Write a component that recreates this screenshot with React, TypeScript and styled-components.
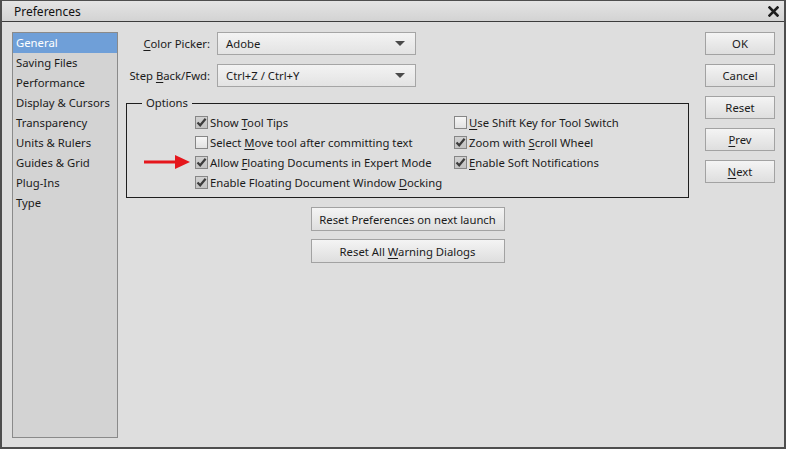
import styled, { createGlobalStyle } from 'styled-components';

const Global = createGlobalStyle`
  html, body { margin: 0; padding: 0; background: #dedede; }
  body { font-family: "Noto Sans", "DejaVu Sans", sans-serif; font-size: 11.3px; color: #1b1b1b; }
  * { box-sizing: border-box; }
`;

const Window = styled.div`
  width: 786px;
  height: 449px;
  display: flex;
  flex-direction: column;
  background: #dedede;
  border: 2px solid #4e4e4e;
  border-top-width: 1px;
`;

const TitleBar = styled.div`
  height: 21px;
  flex-shrink: 0;
  display: flex;
  align-items: center;
  justify-content: space-between;
  padding: 0 5px 0 12px;
  background: linear-gradient(#e4e4e4, #d3d3d3);
  border-bottom: 1px solid #3c3c3c;
  font-size: 12px;
  color: #111;
`;

const Body = styled.div`
  flex: 1;
  display: flex;
  padding: 10px 9px 9px 10px;
  min-height: 0;
`;

const Sidebar = styled.ul`
  list-style: none;
  margin: 0;
  padding: 0;
  width: 106px;
  flex-shrink: 0;
  background: #d3d3d3;
  border: 1px solid #8a8a8a;
`;

const SideItem = styled.li<{ $active?: boolean }>`
  height: 20px;
  line-height: 20px;
  padding-left: 3px;
  background: ${p => (p.$active ? '#6f9fd8' : 'transparent')};
  color: ${p => (p.$active ? '#fff' : '#1b1b1b')};
`;

const Main = styled.div`
  flex: 1;
  margin-left: 8px;
  display: flex;
  flex-direction: column;
  position: relative;
`;

const Form = styled.div`
  display: grid;
  grid-template-columns: 91px 199px;
  row-gap: 9px;
  align-items: center;
`;

const Label = styled.label`
  text-align: right;
  padding-right: 7px;
  white-space: nowrap;
`;

const Select = styled.div`
  height: 23px;
  display: flex;
  align-items: center;
  justify-content: space-between;
  padding: 0 10px 0 8px;
  border: 1px solid #a5a5a5;
  background: linear-gradient(#f3f3f3, #e3e3e3);
`;

const Caret = styled.span`
  width: 0;
  height: 0;
  border-left: 5px solid transparent;
  border-right: 5px solid transparent;
  border-top: 5px solid #4a4a4a;
`;

const Options = styled.fieldset`
  margin: 9px 0 0;
  padding: 2px 0 5px;
  border: 1px solid #1e1e1e;
`;

const Legend = styled.legend`
  margin-left: 15px;
  padding: 0 4px;
  line-height: 14px;
`;

const OptionGrid = styled.div`
  margin-left: 68px;
  display: grid;
  grid-template-columns: 259px 1fr;
  grid-auto-rows: 20px;
  align-items: center;
`;

const Check = styled.label`
  display: flex;
  align-items: center;
  gap: 2px;
  white-space: nowrap;
`;

const Box = styled.span<{ $on?: boolean }>`
  width: 13px;
  height: 13px;
  flex-shrink: 0;
  border: 1px solid #868686;
  background: ${p => (p.$on ? 'linear-gradient(#d2d2d2, #c2c2c2)' : 'linear-gradient(#f6f6f6, #e2e2e2)')};
  display: flex;
  align-items: center;
  justify-content: center;
`;

const U = styled.span`
  text-decoration: underline;
  text-underline-offset: 2px;
`;

const Arrow = styled.svg`
  position: absolute;
  left: 18px;
  top: 122px;
`;

const CenterButtons = styled.div`
  display: flex;
  flex-direction: column;
  align-items: center;
  gap: 8px;
  margin-top: 9px;
`;

const Button = styled.div<{ $w?: number }>`
  width: ${p => p.$w ?? 70}px;
  height: ${p => (p.$w ? 24 : 23)}px;
  display: flex;
  align-items: center;
  justify-content: center;
  border: 1px solid #a2a2a2;
  background: linear-gradient(#f4f4f4, #dedede);
  color: #1b1b1b;
  white-space: nowrap;
`;

const Side = styled.div`
  width: 70px;
  margin-left: 16px;
  display: flex;
  flex-direction: column;
  gap: 9px;
`;

const Tick = ({ on }: { on?: boolean }) => (
  <Box $on={on}>
    {on && (
      <svg width="11" height="11" viewBox="0 0 11 11">
        <path d="M1.5 5.5 L4.2 8.3 L9.6 1.8" fill="none" stroke="#3c3c3c" strokeWidth="2.2" />
      </svg>
    )}
  </Box>
);

const CloseIcon = () => (
  <svg width="11" height="11" viewBox="0 0 11 11">
    <path d="M1.5 1.5 L9.5 9.5 M9.5 1.5 L1.5 9.5" stroke="#1e1e1e" strokeWidth="2.6" strokeLinecap="square" />
  </svg>
);

const sections = ['General', 'Saving Files', 'Performance', 'Display & Cursors', 'Transparency', 'Units & Rulers', 'Guides & Grid', 'Plug-Ins', 'Type'];

export default function App() {
  return (
    <>
      <Global />
      <Window>
        <TitleBar>
          <span>Preferences</span>
          <CloseIcon />
        </TitleBar>
        <Body>
          <Sidebar>
            {sections.map((s, i) => (
              <SideItem key={s} $active={i === 0}>{s}</SideItem>
            ))}
          </Sidebar>
          <Main>
            <Form>
              <Label><U>C</U>olor Picker:</Label>
              <Select><span>Adobe</span><Caret /></Select>
              <Label>Step <U>B</U>ack/Fwd:</Label>
              <Select><span>Ctrl+Z / Ctrl+Y</span><Caret /></Select>
            </Form>
            <Options>
              <Legend>Options</Legend>
              <OptionGrid>
                <Check><Tick on /><span>Show <U>T</U>ool Tips</span></Check>
                <Check><Tick /><span><U>U</U>se Shift Key for Tool Switch</span></Check>
                <Check><Tick /><span>Select <U>M</U>ove tool after committing text</span></Check>
                <Check><Tick on /><span>Zoom with <U>S</U>croll Wheel</span></Check>
                <Check><Tick on /><span>Allow <U>F</U>loating Documents in Expert Mode</span></Check>
                <Check><Tick on /><span><U>E</U>nable Soft Notifications</span></Check>
                <Check><Tick on /><span>Enable Floating Document Window <U>D</U>ocking</span></Check>
              </OptionGrid>
            </Options>
            <Arrow width="47" height="16" viewBox="0 0 47 16">
              <path d="M0 8 H34" stroke="#e5161c" strokeWidth="3" />
              <path d="M31 1 L46 8 L31 15 Z" fill="#e5161c" />
            </Arrow>
            <CenterButtons>
              <Button $w={194}>Reset Preferences on next launch</Button>
              <Button $w={194}><span>Reset All <U>W</U>arning Dialogs</span></Button>
            </CenterButtons>
          </Main>
          <Side>
            <Button>OK</Button>
            <Button>Cancel</Button>
            <Button>Reset</Button>
            <Button><span><U>P</U>rev</span></Button>
            <Button><span><U>N</U>ext</span></Button>
          </Side>
        </Body>
      </Window>
    </>
  );
}
